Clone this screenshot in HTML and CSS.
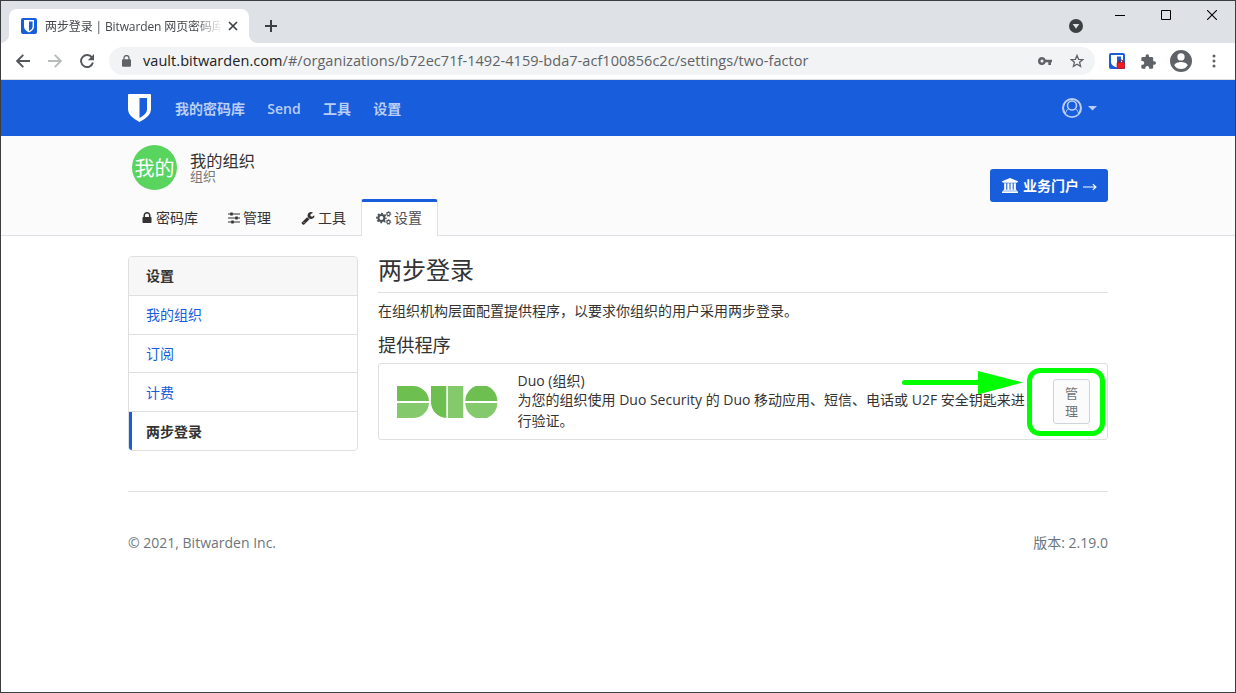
FILE: index.html
```html
<!DOCTYPE html>
<html lang="zh-CN">
<head>
<meta charset="utf-8">
<title>两步登录 | Bitwarden 网页密码库</title>
<link rel="stylesheet" href="styles.css">
</head>
<body>
<div class="window">
  <div class="titlebar">
    <div class="tab">
      <svg class="favicon" width="16" height="16" viewBox="0 0 16 16"><rect width="16" height="16" rx="2" fill="#175ddc"/><path d="M3 2h10v6.500q0 3.500-5 6-5-2.500-5-6z" fill="#fff"/><path d="M8 3.400h3.600v5q0 2.500-3.600 4.500z" fill="#175ddc"/></svg>
      <span class="tab-title">两步登录 | Bitwarden 网页密码库</span>
      <svg class="tab-close" width="10" height="10" viewBox="0 0 10 10"><path d="M1 1l8 8M9 1l-8 8" stroke="#3c4043" stroke-width="1.700"/></svg>
    </div>
    <svg class="new-tab" width="12" height="12" viewBox="0 0 12 12"><path d="M6 0v12M0 6h12" stroke="#3c4043" stroke-width="2"/></svg>
    <div class="window-controls">
      <svg class="tab-search" width="14" height="14" viewBox="0 0 14 14"><circle cx="7" cy="7" r="7" fill="#3c4043"/><path d="M3.700 5h6.600L7 9.800z" fill="#dee1e6"/></svg>
      <svg class="control" width="10" height="10" viewBox="0 0 10 10"><path d="M0 5.500h10" stroke="#000"/></svg>
      <svg class="control" width="10" height="10" viewBox="0 0 10 10"><path d="M.5.5h9v9h-9z" fill="none" stroke="#000"/></svg>
      <svg class="control" width="10" height="10" viewBox="0 0 10 10"><path d="M0 0l10 10M10 0L0 10" stroke="#000" stroke-width="1.100"/></svg>
    </div>
  </div>
  <div class="toolbar">
    <svg width="14" height="14" viewBox="0 0 14 14" fill="none" stroke="#54575b" stroke-width="1.900"><path d="M14 7H1.500M7.300.8L1.200 7l6.100 6.200"/></svg>
    <svg class="forward" width="14" height="14" viewBox="0 0 14 14" fill="none" stroke="#b9bbbd" stroke-width="1.900"><path d="M0 7h12.500M6.700.8L12.800 7l-6.100 6.200"/></svg>
    <svg class="reload" width="14" height="14" viewBox="0 0 14 14"><path d="M12 3.600A6 6 0 1 0 12.900 8.500" fill="none" stroke="#54575b" stroke-width="1.900"/><path d="M14 0v6.200H7.800z" fill="#54575b"/></svg>
    <div class="address">
      <svg class="address-lock" width="9" height="12" viewBox="0 0 9 12"><path d="M2 5V3a2.500 2.500 0 0 1 5 0v2" fill="none" stroke="#5f6368" stroke-width="1.300"/><rect y="4.300" width="9" height="7.500" rx="1" fill="#5f6368"/></svg>
      <span class="url"><span class="host">vault.bitwarden.com</span>/#/organizations/b72ec71f-1492-4159-bda7-acf100856c2c/settings/two-factor</span>
      <svg class="key" width="14" height="8" viewBox="0 0 14 8"><path d="M4 0a4 4 0 0 1 3.800 2.700H14v2.600h-1V8h-2.700V5.300H7.800A4 4 0 1 1 4 0zm0 2.500a1.500 1.500 0 1 0 0 3 1.500 1.500 0 0 0 0-3z" fill="#5f6368"/></svg>
      <svg class="star" width="14" height="14" viewBox="0 0 14 14"><path d="M7 1.400l1.600 3.900 4.200.3-3.200 2.700 1 4.100L7 10.200l-3.600 2.200 1-4.100L1.200 5.600l4.200-.3z" fill="none" stroke="#5f6368" stroke-width="1.300"/></svg>
    </div>
    <svg class="extension" width="16" height="16" viewBox="0 0 16 16"><rect width="16" height="16" rx="2" fill="#175ddc"/><path d="M2 2h12v7q0 3.500-6 5.500-6-2-6-5.500z" fill="#fff"/><path d="M8 3.500h4v6L8 12z" fill="#175ddc"/><path d="M9.900 10V9a2 2 0 0 1 4 0v1" fill="none" stroke="#9c1620" stroke-width="1.200"/><rect x="8" y="9.500" width="7.800" height="6.300" rx="1" fill="#ed1c24" stroke="#8c1820" stroke-width=".6"/></svg>
    <svg class="puzzle" width="15" height="15" viewBox="1.500 1 21.500 21"><path d="M20.500 11H19V7a2 2 0 0 0-2-2h-4V3.500a2.500 2.500 0 0 0-5 0V5H4a2 2 0 0 0-2 2v3.800h1.500a2.700 2.700 0 0 1 0 5.400H2V20a2 2 0 0 0 2 2h3.800v-1.500a2.700 2.700 0 0 1 5.400 0V22H17a2 2 0 0 0 2-2v-4h1.500a2.500 2.500 0 0 0 0-5z" fill="#5f6368"/></svg>
    <svg class="profile" width="22" height="22" viewBox="2 2 20 20"><path d="M12 2a10 10 0 1 0 0 20 10 10 0 0 0 0-20zm0 3a3.300 3.300 0 1 1 0 6.600A3.300 3.300 0 0 1 12 5zm0 14.200a7.200 7.200 0 0 1-6-3.220c.03-1.990 4-3.080 6-3.080s5.970 1.090 6 3.080a7.200 7.200 0 0 1-6 3.220z" fill="#5f6368"/></svg>
    <svg class="kebab" width="4" height="14" viewBox="0 0 4 14" fill="#5f6368"><circle cx="2" cy="2" r="1.500"/><circle cx="2" cy="7" r="1.500"/><circle cx="2" cy="12" r="1.500"/></svg>
  </div>
  <nav class="navbar">
    <div class="container nav-row">
      <svg class="brand" width="23" height="28" viewBox="0 0 23 28"><path d="M1 0h21q1 0 1 1v14.500Q23 22 11.500 28 0 22 0 15.500V1q0-1 1-1z" fill="#fff"/><path d="M11.500 4H19v11.500q0 4.300-7.500 8.500z" fill="#175ddc"/></svg>
      <a>我的密码库</a><a>Send</a><a>工具</a><a>设置</a>
      <svg class="user" width="20" height="20" viewBox="0 0 20 20"><circle cx="10" cy="10" r="10" fill="#bacef5"/><path d="M3.600 14.500A7.900 7.900 0 1 1 16.400 14.500Q15.900 11.300 13.900 11.100A5.300 5.300 0 1 0 6.100 11.100Q4.100 11.300 3.600 14.500z" fill="#175ddc"/><circle cx="10" cy="7.600" r="4.700" fill="#bacef5"/><circle cx="10" cy="7.500" r="3.700" fill="#175ddc"/><path d="M4 16Q4.300 12.200 6.500 11.600 10 14 13.500 11.600 15.700 12.200 16 16 10 20.600 4 16z" fill="#175ddc"/></svg>
      <svg class="caret" width="9" height="5" viewBox="0 0 9 5"><path d="M0 0h9L4.500 4.500z" fill="#bacef5"/></svg>
    </div>
  </nav>
  <header class="org-header">
    <div class="container">
      <div class="org-row">
        <div class="avatar">我的</div>
        <div class="org-name"><div>我的组织</div><small>组织</small></div>
        <div class="portal">
          <svg width="16" height="15" viewBox="0 0 1920 1792" fill="#fff"><path d="M960 0l960 384v128h-128q0 26-20.500 45t-48.500 19h-1526q-28 0-48.500-19t-20.500-45h-128v-128zm-704 640h256v768h128v-768h256v768h128v-768h256v768h128v-768h256v768h59q28 0 48.500 19t20.500 45v64h-1664v-64q0-26 20.500-45t48.500-19h59zm1595 960q28 0 48.500 19t20.500 45v128h-1920v-128q0-26 20.500-45t48.500-19z"/></svg>
          <span>业务门户</span>
          <svg class="arrow" width="14" height="9" viewBox="0 0 14 9"><path d="M0 5h13M9.800 2.200L13 5l-3.200 2.800" fill="none" stroke="#fff" stroke-width="1.100"/></svg>
        </div>
      </div>
      <div class="tabs">
        <div class="org-tab tab-vault"><svg width="14" height="14" viewBox="0 0 1792 1792" fill="#333"><path d="M640 768h512v-192q0-106-75-181t-181-75-181 75-75 181v192zm832 96v576q0 40-28 68t-68 28h-960q-40 0-68-28t-28-68v-576q0-40 28-68t68-28h32v-192q0-184 132-316t316-132 316 132 132 316v192h32q40 0 68 28t28 68z"/></svg>密码库</div>
        <div class="org-tab tab-manage"><svg width="12" height="12" viewBox="0 0 12 12"><path d="M0 2h12M0 6h12M0 10h12" stroke="#333" stroke-width="1.200"/><path d="M3.500.5v3M8.500 4.500v3M4.500 8.500v3" stroke="#333" stroke-width="2.500"/></svg>管理</div>
        <div class="org-tab tab-tools"><svg width="14" height="14" viewBox="0 0 1792 1792" fill="#333"><path d="M448 1472q0-26-19-45t-45-19-45 19-19 45 19 45 45 19 45-19 19-45zm644-420l-682 682q-37 37-90 37-52 0-91-37l-106-108q-38-36-38-90 0-53 38-91l681-681q39 98 114.500 173.500t173.500 114.500zm634-435q0 39-23 106-47 134-164.500 217.500t-258.500 83.500q-185 0-316.500-131.500t-131.500-316.500 131.500-316.500 316.500-131.500q58 0 121.500 16.500t107.500 46.500q16 11 16 28t-16 28l-293 169v224l193 107q5-3 79-48.500t135.500-81 70.500-35.500q15 0 23.500 10t8.500 25z"/></svg>工具</div>
        <div class="org-tab active"><svg width="16" height="14" viewBox="0 0 16 14" fill="none" stroke="#495057"><circle cx="5.400" cy="7" r="3" stroke-width="2"/><circle cx="5.400" cy="7" r="4.500" stroke-width="1.600" stroke-dasharray="1.900 1.634" stroke-dashoffset=".95"/><circle cx="12.500" cy="3" r="1.600" stroke-width="1.100"/><circle cx="12.500" cy="3" r="2.400" stroke-width=".8" stroke-dasharray="1.100 .785"/><circle cx="12.500" cy="11" r="1.600" stroke-width="1.100"/><circle cx="12.500" cy="11" r="2.400" stroke-width=".8" stroke-dasharray="1.100 .785"/></svg>设置</div>
      </div>
    </div>
  </header>
  <main class="container page">
    <aside class="side">
      <div class="side-head">设置</div>
      <a>我的组织</a><a class="short">订阅</a><a class="low">计费</a><a class="current low">两步登录</a>
    </aside>
    <section class="content">
      <h1>两步登录</h1>
      <p class="lead">在组织机构层面配置提供程序，以要求你组织的用户采用两步登录。</p>
      <h2>提供程序</h2>
      <div class="provider">
        <svg class="duo" width="101" height="32" viewBox="0 0 101 32"><path d="M0 15V0h16a16 16 0 0 1 16 15zM34 0h15.300v32A16 16 0 0 1 34 16zM68.300 15a16 16 0 0 1 32 0z" fill="#6dbf50"/><path d="M0 17h32a16 16 0 0 1-16 15H0zM51 0h15.300v32H51zM68.300 17h32a16 16 0 0 1-32 0z" fill="#84c96c"/></svg>
        <div class="provider-text"><div>Duo (组织)</div><p>为您的组织使用 Duo Security 的 Duo 移动应用、短信、电话或 U2F 安全钥匙来进<br>行验证。</p></div>
        <div class="manage">管<br>理</div>
        <svg class="annotation" width="206" height="70" viewBox="0 0 206 70"><path d="M4.500 15.500H80" stroke="#0f0" stroke-width="5" stroke-linecap="round"/><path d="M78 4l45 11.500-45 12z" fill="#0f0"/><rect x="129.500" y="3.500" width="73" height="63" rx="10.500" fill="none" stroke="#0f0" stroke-width="5"/></svg>
      </div>
    </section>
  </main>
  <footer class="container footer"><span>© 2021, Bitwarden Inc.</span><span>版本: 2.19.0</span></footer>
</div>
</body>
</html>
```
FILE: styles.css
```css
* { box-sizing: border-box; }
body { margin: 0; background: #fff; color: #333; font: 14px/21px "Open Sans", "Noto Sans CJK SC", sans-serif; }
svg { display: block; flex: none; }
.window { width: 1236px; height: 693px; border: 1px solid #3b3d40; overflow: hidden; }
.titlebar { height: 42px; background: #dee1e6; display: flex; align-items: flex-start; }
.tab { height: 34px; width: 240px; margin: 8px 0 0 8px; padding-left: 12px; background: #fff; border-radius: 8px 8px 0 0; display: flex; align-items: center; position: relative; }
.tab::before, .tab::after { content: ""; position: absolute; bottom: 0; width: 8px; height: 8px; }
.tab::before { left: -8px; background: radial-gradient(circle at 0 0, transparent 7.500px, #fff 8px); }
.tab::after { right: -8px; background: radial-gradient(circle at 100% 0, transparent 7.500px, #fff 8px); }
.tab-title { width: 176px; margin-left: 8px; overflow: hidden; white-space: nowrap; font-size: 12px; letter-spacing: -.12px; color: #45484c; -webkit-mask-image: linear-gradient(90deg, #000 150px, transparent 177px); mask-image: linear-gradient(90deg, #000 150px, transparent 177px); }
.tab-close { margin-left: 7px; }
.new-tab { margin: 19px 0 0 16px; }
.window-controls { margin-left: auto; display: flex; padding-right: 18px; }
.tab-search { margin-top: 18px; }
.control { margin-top: 9px; margin-left: 36px; }
.tab-search + .control { margin-left: 32px; }
.toolbar { height: 37px; background: #fff; border-bottom: 1px solid #dadce0; display: flex; align-items: center; padding-left: 15px; }
.forward { margin-left: 18px; }
.reload { margin-left: 18px; }
.address { width: 986px; height: 28px; margin-left: 15px; border-radius: 14px; background: #f1f3f4; display: flex; align-items: center; padding: 0 11px 0 13px; }
.url { margin: -2px 0 0 12px; font-size: 14.500px; letter-spacing: .05px; color: #5f6368; white-space: nowrap; }
.host { color: #202124; }
.key { margin-left: auto; }
.star { margin-left: 18px; }
.extension { margin-left: 14px; }
.puzzle { margin-left: 16px; }
.profile { margin-left: 14px; }
.kebab { margin-left: 20px; }
.container { width: 980px; margin-left: 127px; }
.navbar { height: 56px; background: #175ddc; }
.nav-row { height: 56px; display: flex; align-items: center; color: #bacef5; font-weight: 600; }
.nav-row a { margin-left: 22.300px; }
.nav-row .brand + a { margin-left: 24px; }
.user { margin-left: auto; }
.caret { margin: 0 11px 0 6px; }
.org-header { height: 100px; background: #fbfbfb; border-bottom: 1px solid #dee2e6; }
.org-row { height: 63px; display: flex; padding-top: 9px; }
.avatar { width: 45px; height: 45px; margin-left: 4px; border-radius: 50%; background: #58d45f; color: #fff; font-size: 20px; line-height: 47px; text-align: center; }
.org-name { margin-left: 13px; padding-top: 7px; font-size: 16.300px; line-height: 18px; }
.org-name small { display: block; font-size: 13px; line-height: 13px; color: #777; }
.portal { width: 118px; height: 33px; margin: 24px 0 0 auto; border-radius: 3px; background: #175ddc; color: #fff; font-weight: 700; display: flex; align-items: center; padding-left: 12px; }
.portal span { margin-left: 5px; }
.arrow { margin: 2px 0 0 4px; }
.tabs { height: 37px; display: flex; }
.org-tab { display: flex; align-items: center; border-top: 4px solid transparent; padding-bottom: 4px; color: #333; }
.tab-vault { margin-left: 12px; }
.tab-vault svg { margin-right: 2px; }
.tab-manage { margin-left: 30px; }
.tab-manage svg { margin-right: 3px; }
.tab-tools { margin-left: 30px; }
.tab-tools svg { margin-right: 3px; }
.org-tab.active { width: 77px; margin-left: 15px; padding-left: 14px; background: #fff; color: #495057; border: 1px solid #dee2e6; border-top: 3px solid #175ddc; border-bottom: 0; border-radius: 3px 3px 0 0; padding-bottom: 3px; }
.active svg { margin-right: 2px; }
.page { height: 255px; display: flex; padding-top: 20px; }
.side { width: 230px; height: 195px; border: 1px solid #dfdfdf; border-radius: 4px; overflow: hidden; }
.side-head { height: 39px; padding-left: 17px; line-height: 38px; background: #f7f7f7; border-bottom: 1px solid #dfdfdf; font-weight: 600; }
.side a { display: block; height: 39px; padding-left: 17px; line-height: 38px; color: #175ddc; border-bottom: 1px solid #dfdfdf; }
.side a.short { height: 38px; }
.side a.low { line-height: 40px; }
.side a.current { border-left: 3px solid #175ddc; border-bottom: 0; padding-left: 14px; color: #333; font-weight: 600; }
.content { width: 730px; margin-left: 20px; }
h1 { height: 37px; margin: 0; font-size: 24px; line-height: 28px; font-weight: 400; border-bottom: 1px solid #dfdfdf; }
.lead { margin: 7px 0 0; }
h2 { margin: 13px 0 7px; font-size: 18.200px; line-height: 22px; font-weight: 400; }
.provider { height: 77px; border: 1px solid #dfdfdf; border-radius: 3px; display: flex; position: relative; }
.duo { margin: 22px 0 0 18px; }
.provider-text { width: 515.500px; margin: 6px 0 0 19.500px; white-space: nowrap; }
.provider-text div { height: 19px; }
.provider-text p { margin: 0; }
.manage { width: 37px; height: 45px; margin: 15px 0 0 20px; padding-top: 4px; border: 1px solid #ced4da; border-radius: 3px; background: #fbfbfb; color: #6c757d; font-size: 13px; line-height: 18px; text-align: center; }
.annotation { position: absolute; left: 521px; top: 3px; }
.footer { padding-top: 40px; border-top: 1px solid #dfdfdf; display: flex; justify-content: space-between; color: #6c757d; }
```
